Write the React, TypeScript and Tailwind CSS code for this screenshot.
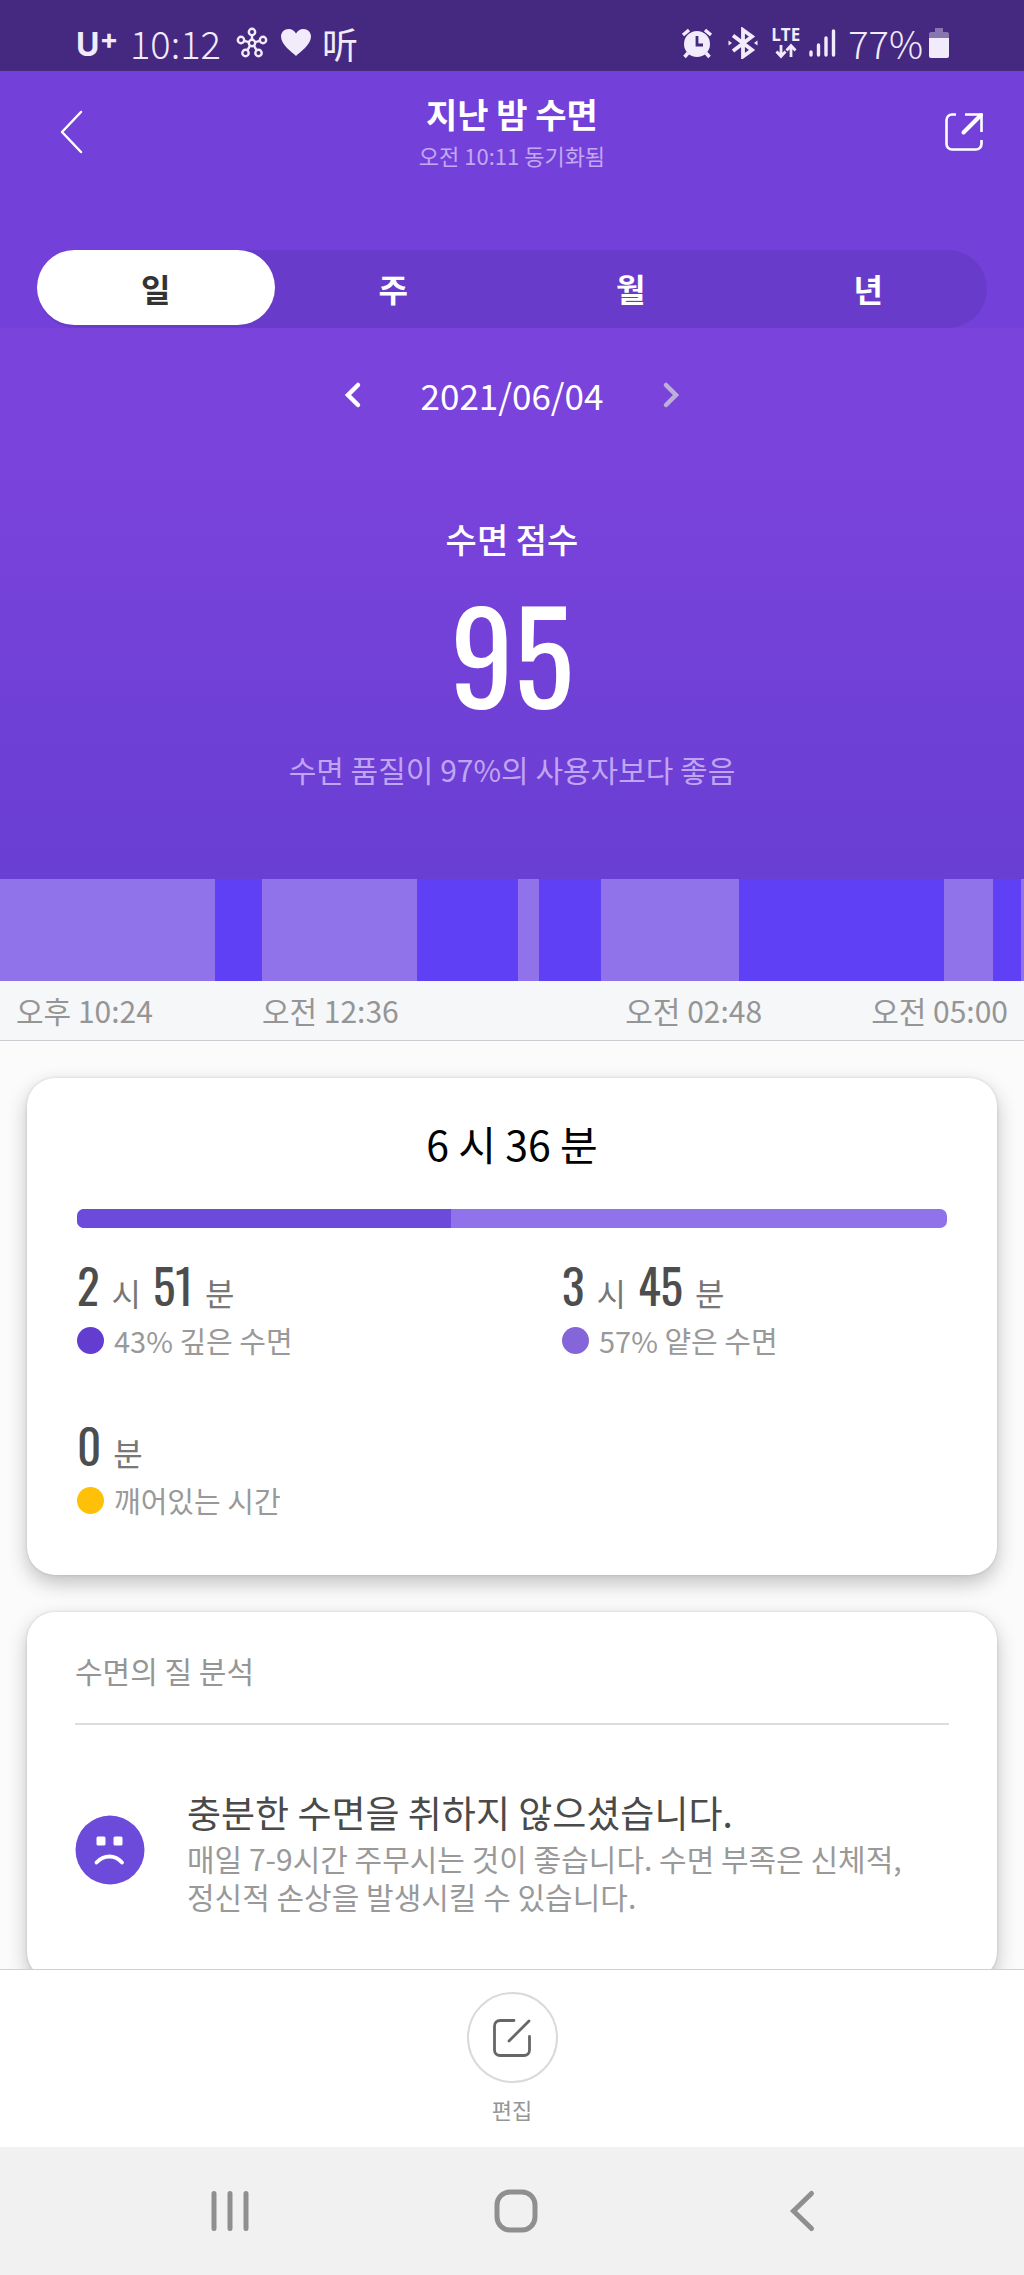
import React, { useState } from "react";

const TABS = ["일", "주", "월", "년"];

type Stage = "light" | "deep";

// Widths are proportional to the time spent in each stage
const STAGES: { stage: Stage; span: number }[] = [
  { stage: "light", span: 215 },
  { stage: "deep", span: 47 },
  { stage: "light", span: 155 },
  { stage: "deep", span: 101 },
  { stage: "light", span: 21 },
  { stage: "deep", span: 62 },
  { stage: "light", span: 138 },
  { stage: "deep", span: 205 },
  { stage: "light", span: 49 },
  { stage: "deep", span: 28 },
  { stage: "light", span: 3 },
];

const StatusBar: React.FC = () => (
  <div className="flex h-[71px] shrink-0 items-center justify-between bg-[#452880] pt-[14px] pr-[75px] pl-[76px] text-[#f1ebfb]">
    <div className="flex items-center">
      <span className="flex w-[54px] items-start pt-1 font-[Inter,sans-serif] font-bold">
        <span className="text-[32px] leading-8">U</span>
        <span className="text-[28px] leading-5">+</span>
      </span>
      <span className="w-[106px] text-[38px] leading-10 font-light">10:12</span>
      <svg className="mr-3 h-8 w-8" viewBox="0 0 32 32" fill="none" stroke="currentColor" strokeWidth="2.4">
        <circle cx="16" cy="16" r="3.2" />
        <circle cx="16" cy="5" r="3.2" />
        <circle cx="5" cy="13" r="3.2" />
        <circle cx="27" cy="13" r="3.2" />
        <circle cx="9.5" cy="26" r="3.2" />
        <circle cx="22.5" cy="26" r="3.2" />
        <path d="M16 8.200v4.600M8 13.800l5 1.400M24 13.800l-5 1.400M11.300 23.300l2.800-4.600M20.700 23.300l-2.800-4.600" />
      </svg>
      <svg className="mr-[10px] h-8 w-8" viewBox="0 0 32 32" fill="currentColor">
        <path d="M16 29C12 25 1 18 1 9.500 1 5 4.500 2 8.500 2c3.500 0 6 2 7.500 4.500C17.500 4 20 2 23.500 2 27.500 2 31 5 31 9.500 31 18 20 25 16 29z" />
      </svg>
      <span className="font-['Noto_Sans_CJK_SC',sans-serif] text-[36px] leading-10">听</span>
    </div>
    <div className="flex items-center">
      <svg className="mr-[14px] h-8 w-8" viewBox="0 0 32 32" fill="none" stroke="currentColor">
        <circle cx="16" cy="17" r="13" fill="currentColor" stroke="none" />
        <path d="M2 8l6-5M30 8l-6-5" strokeWidth="3.500" />
        <path d="M7 26l-3.500 4M25 26l3.500 4" strokeWidth="3.500" />
        <path d="M16 9v9h6" stroke="#452880" strokeWidth="2.800" />
      </svg>
      <svg className="mr-3 h-8 w-8" viewBox="0 0 32 32" fill="none" stroke="currentColor" strokeWidth="3.800">
        <path d="M6 8.500l19 14.500-9 6.500V3l9 6.500L6 24" />
        <path d="M1.500 13.500v5l3.500-2.500zM30.500 13.500v5L27 16z" fill="currentColor" stroke="none" />
      </svg>
      <span className="mr-2 flex w-[29px] flex-col items-center">
        <span className="font-['Open_Sans',sans-serif] text-[17px] leading-4 font-bold">LTE</span>
        <svg className="h-4 w-6" viewBox="0 0 24 16" fill="none" stroke="currentColor" strokeWidth="2.800">
          <path d="M7 2v11M2.500 8.500L7 13.500l4.500-5M17 14V3M12.500 7.500L17 2.500l4.500 5" />
        </svg>
      </span>
      <svg className="mr-3 h-8 w-7" viewBox="0 0 28 32" fill="none" stroke="currentColor" strokeWidth="3.400" strokeLinecap="round">
        <path d="M3 25v3M10.500 18v10M18 11v17M25.500 4v24" />
      </svg>
      <span className="text-[38px] leading-10 font-light">77%</span>
      <svg className="ml-1.5 h-8 w-5" viewBox="0 0 20 32" fill="currentColor">
        <path d="M6 1h8v4h4a2 2 0 0 1 2 2v4H0V7a2 2 0 0 1 2-2h4z" opacity=".4" />
        <path d="M0 11h20v18a2 2 0 0 1-2 2H2a2 2 0 0 1-2-2z" />
      </svg>
    </div>
  </div>
);

const Header: React.FC = () => {
  const [activeTab, setActiveTab] = useState("일");

  return (
    <header className="bg-[#7341d9] pt-5 text-white">
      <div className="flex items-center justify-between pr-10 pl-[60px]">
        <button type="button" aria-label="뒤로" className="w-6">
          <svg className="h-11 w-6" viewBox="0 0 24 44" fill="none" stroke="currentColor" strokeWidth="2.500" strokeLinecap="round" strokeLinejoin="round">
            <path d="M21 2L2 22l19 20" />
          </svg>
        </button>
        <div className="text-center">
          <h1 className="text-[34px] leading-[46px] font-bold">지난 밤 수면</h1>
          <p className="text-[22px] leading-9 text-[#c3a8f2]">오전 10:11 동기화됨</p>
        </div>
        <button type="button" aria-label="공유" className="flex w-11 justify-end">
          <svg className="h-10 w-10" viewBox="0 0 40 40" fill="none" stroke="currentColor" strokeWidth="2.600">
            <path d="M12 2.500H8A5.500 5.500 0 0 0 2.500 8v24A5.500 5.500 0 0 0 8 37.500h24a5.500 5.500 0 0 0 5.500-5.500v-4" />
            <path d="M21 2.500h16.500V20" />
            <path d="M37 3L19.500 20.500" strokeWidth="4" strokeLinecap="round" />
          </svg>
        </button>
      </div>
      <div role="tablist" className="mx-[37px] mt-[77px] flex h-[78px] items-start rounded-full bg-[#693bca]">
        {TABS.map((tab) => (
          <button
            key={tab}
            type="button"
            role="tab"
            aria-selected={activeTab === tab}
            onClick={() => setActiveTab(tab)}
            className={`h-[75px] flex-1 rounded-full text-[32px] font-bold ${
              activeTab === tab ? "bg-white text-[#333333]" : "text-white"
            }`}
          >
            {tab}
          </button>
        ))}
      </div>
    </header>
  );
};

const Score: React.FC = () => (
  <section className="flex h-[551px] flex-col items-center bg-linear-to-b from-[#7a43dc] from-25% to-[#693ed2] pt-[47px] text-white">
    <div className="flex items-center">
      <button type="button" aria-label="이전 날짜">
        <svg className="h-7 w-5" viewBox="0 0 20 28" fill="none" stroke="currentColor" strokeWidth="4.500" strokeLinecap="round">
          <path d="M16 4L6 14l10 10" />
        </svg>
      </button>
      <span className="mx-[59px] text-[35px] leading-10">2021/06/04</span>
      <button type="button" aria-label="다음 날짜" className="text-[#bdb0d6]">
        <svg className="h-7 w-5" viewBox="0 0 20 28" fill="none" stroke="currentColor" strokeWidth="4.500" strokeLinecap="round">
          <path d="M4 4l10 10L4 24" />
        </svg>
      </button>
    </div>
    <h2 className="mt-[102px] text-[34px] leading-[44px] font-medium">수면 점수</h2>
    <p className="mt-7 font-[Oswald,sans-serif] text-[126px] leading-[126px]">95</p>
    <p className="mt-[34px] text-[30px] leading-10 text-[#c0a5f3]">수면 품질이 97%의 사용자보다 좋음</p>
  </section>
);

const Timeline: React.FC = () => (
  <section>
    <div className="flex h-[102px]">
      {STAGES.map(({ stage, span }, i) => (
        <div
          key={i}
          className={stage === "deep" ? "bg-[#5f40f5]" : "bg-[#9073ea]"}
          style={{ flexGrow: span }}
        />
      ))}
    </div>
    <div className="flex justify-between border-b border-[#c8cbcf] bg-[#f6f7f9] px-4 text-[30px] leading-[59px] text-[#959595]">
      <div className="flex gap-[109px]">
        <span>오후 10:24</span>
        <span>오전 12:36</span>
      </div>
      <div className="flex gap-[109px]">
        <span>오전 02:48</span>
        <span>오전 05:00</span>
      </div>
    </div>
  </section>
);

interface DurationProps {
  hours?: number;
  minutes: number;
  label: string;
  dot: string;
}

const NUMBER_CLASS = "font-[Oswald,sans-serif] text-[47px] tabular-nums text-[#4d4d4d]";

const Duration: React.FC<DurationProps> = ({ hours, minutes, label, dot }) => (
  <div className="h-40">
    <p className="flex items-baseline gap-3 text-[32px] leading-[50px] text-[#777777]">
      {hours !== undefined && (
        <>
          <span className={NUMBER_CLASS}>{hours}</span>
          <span>시</span>
        </>
      )}
      <span className={NUMBER_CLASS}>{minutes}</span>
      <span>분</span>
    </p>
    <p className="mt-[3px] flex items-center gap-[10px] text-[29px] leading-10 text-[#999999]">
      <span className={`h-[27px] w-[27px] rounded-full ${dot}`} />
      {label}
    </p>
  </div>
);

const CARD_CLASS =
  "rounded-[28px] bg-white shadow-[0_8px_20px_rgba(0,0,0,0.24),0_0_3px_rgba(0,0,0,0.14)]";

const DurationCard: React.FC = () => (
  <section className={`${CARD_CLASS} h-[497px] px-[50px] pt-10`}>
    <h2 className="text-center text-[41px] leading-[50px] text-black">6 시 36 분</h2>
    <div className="mt-[41px] flex h-[19px] overflow-hidden rounded-[7px] bg-[#9073ea]">
      <div className="bg-[#6c4bdb]" style={{ width: "43%" }} />
    </div>
    <div className="mt-8 grid grid-cols-[485fr_385fr]">
      <Duration hours={2} minutes={51} label="43% 깊은 수면" dot="bg-[#623dd0]" />
      <Duration hours={3} minutes={45} label="57% 얕은 수면" dot="bg-[#8465da]" />
      <Duration minutes={0} label="깨어있는 시간" dot="bg-[#fec107]" />
    </div>
  </section>
);

const AnalysisCard: React.FC = () => (
  <section className={`${CARD_CLASS} h-[368px] px-12`}>
    <h2 className="border-b-2 border-[#dddddd] pt-[38px] pb-[33px] text-[30px] leading-10 text-[#959595]">
      수면의 질 분석
    </h2>
    <div className="mt-[60px] flex items-center gap-[42px]">
      <svg className="h-[70px] w-[70px] shrink-0" viewBox="0 0 70 70">
        <circle cx="35" cy="35" r="34.500" fill="#6c4bdb" />
        <rect x="21.500" y="21.500" width="9" height="9" rx="1.500" fill="#fff" />
        <rect x="38.500" y="21.500" width="9" height="9" rx="1.500" fill="#fff" />
        <path d="M21.500 47.500C29 39.500 40 39.500 47 47.500" fill="none" stroke="#fff" strokeWidth="3.800" strokeLinecap="round" />
      </svg>
      <div>
        <h3 className="text-[37px] leading-[54px] text-[#4a4a4a]">충분한 수면을 취하지 않으셨습니다.</h3>
        <p className="text-[30px] leading-[38px] text-[#999999]">
          매일 7-9시간 주무시는 것이 좋습니다. 수면 부족은 신체적,
          <br />
          정신적 손상을 발생시킬 수 있습니다.
        </p>
      </div>
    </div>
  </section>
);

const EditBar: React.FC = () => (
  <div className="flex h-[178px] shrink-0 justify-center border-t border-[#d0d0d0] bg-white pt-[22px]">
    <button type="button" className="flex flex-col items-center text-[22px] leading-8 text-[#959595]">
      <span className="mb-[10px] flex h-[91px] w-[91px] items-center justify-center rounded-full border-2 border-[#dadada]">
        <svg className="h-10 w-10 text-[#666666]" viewBox="0 0 40 40" fill="none" stroke="currentColor" strokeWidth="2.800" strokeLinecap="round">
          <path d="M22 2.500H8A5.500 5.500 0 0 0 2.500 8v24A5.500 5.500 0 0 0 8 37.500h24a5.500 5.500 0 0 0 5.500-5.500V18.500" />
          <path d="M37 3L17 23" />
        </svg>
      </span>
      편집
    </button>
  </div>
);

const NavBar: React.FC = () => (
  <nav className="grid h-32 shrink-0 grid-cols-3 place-items-center bg-[#f1f1f1] pr-[79px] pl-[87px] text-[#8f8f8f]">
    <button type="button" aria-label="최근 앱">
      <svg className="h-11 w-11" viewBox="0 0 44 44" stroke="currentColor" strokeWidth="5" strokeLinecap="round">
        <path d="M6 4.500v35M22 4.500v35M38 4.500v35" />
      </svg>
    </button>
    <button type="button" aria-label="홈">
      <svg className="h-11 w-11" viewBox="0 0 44 44" fill="none" stroke="currentColor" strokeWidth="5">
        <rect x="3" y="3" width="38" height="38" rx="13" />
      </svg>
    </button>
    <button type="button" aria-label="뒤로 가기">
      <svg className="h-11 w-11" viewBox="0 0 44 44" fill="none" stroke="currentColor" strokeWidth="5" strokeLinecap="round">
        <path d="M31.500 4.500L13.500 22l18 17.500" />
      </svg>
    </button>
  </nav>
);

const App: React.FC = () => (
  <div className="flex h-screen flex-col bg-[#fbfbfb] font-['Noto_Sans_CJK_KR',sans-serif]">
    <StatusBar />
    <main className="min-h-0 flex-1 overflow-hidden">
      <Header />
      <Score />
      <Timeline />
      <div className="flex flex-col gap-[37px] px-[27px] pt-[37px]">
        <DurationCard />
        <AnalysisCard />
      </div>
    </main>
    <EditBar />
    <NavBar />
  </div>
);

export default App;
